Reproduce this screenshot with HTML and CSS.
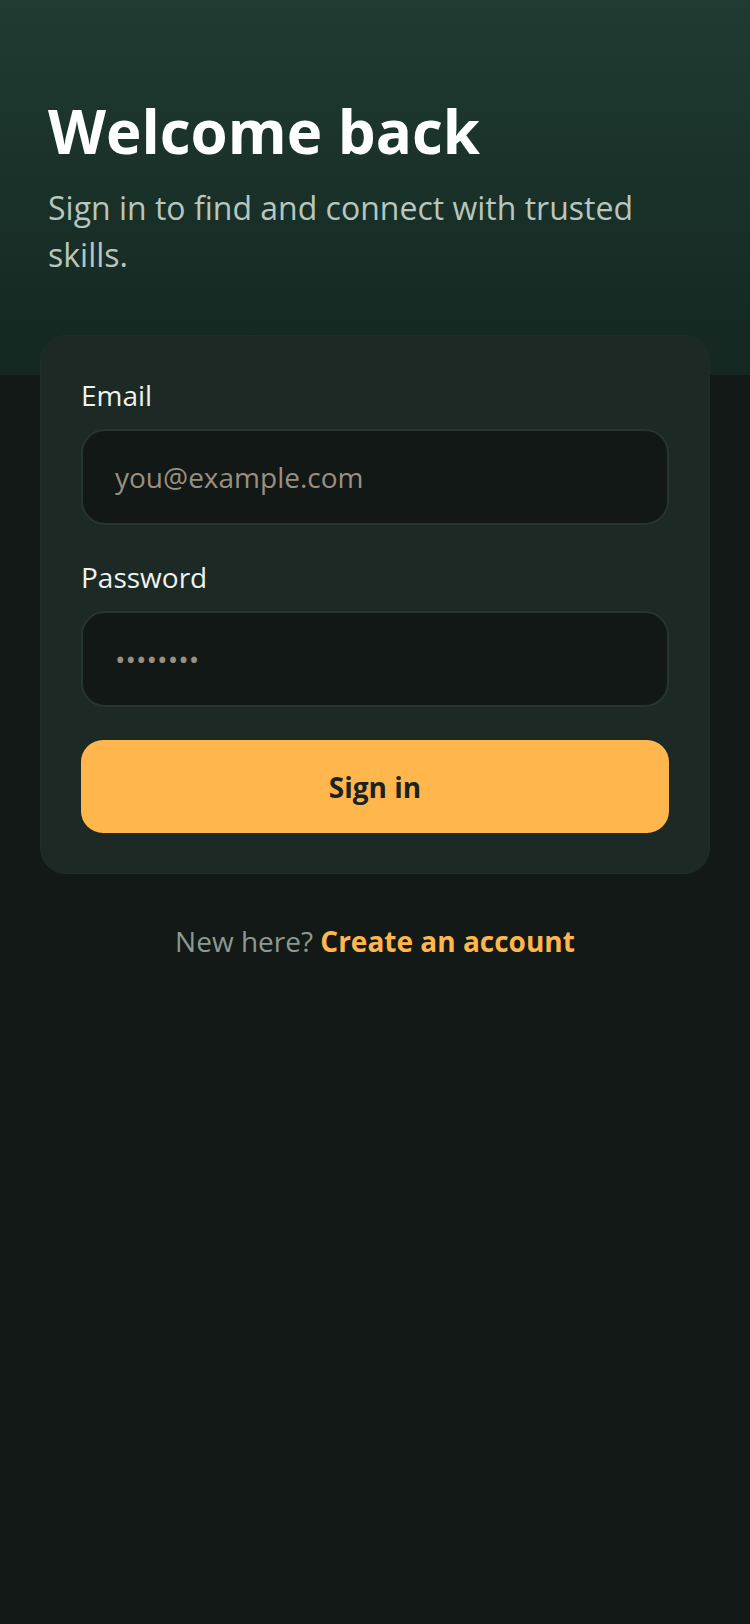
FILE: index.html
```html
<!DOCTYPE html>
<html lang="en">
<head>
<meta charset="utf-8">
<title>Sign in</title>
<link rel="stylesheet" href="styles.css">
</head>
<body>
<main class="page">
  <header class="hero">
    <h1 class="hero-title">Welcome back</h1>
    <p class="hero-sub">Sign in to find and connect with trusted skills.</p>
  </header>
  <form class="card">
    <div class="field">
      <label class="field-label" for="email">Email</label>
      <input class="field-input" id="email" type="email" placeholder="you@example.com">
    </div>
    <div class="field">
      <label class="field-label" for="password">Password</label>
      <input class="field-input field-password" id="password" type="password" placeholder="••••••••">
    </div>
    <button class="btn-primary" type="button">Sign in</button>
  </form>
  <p class="footer-note">New here? <a class="footer-link" href="#">Create an account</a></p>
</main>
</body>
</html>
```

FILE: styles.css
```css
* { box-sizing: border-box; }
html, body {
  margin: 0;
  padding: 0;
}
body {
  min-height: 1624px;
  font-family: "Open Sans", "Noto Sans", sans-serif;
  background: linear-gradient(180deg, #1f3b32 0px, #142720 375px, #121917 375px, #121917 100%);
  color: #eef3ef;
}
.page {
  display: flex;
  flex-direction: column;
}
.hero {
  padding: 95px 48px 0 48px;
  height: 335px;
}
.hero-title {
  margin: 0;
  font-size: 60px;
  line-height: 72px;
  font-weight: 700;
  color: #ffffff;
  letter-spacing: 0;
}
.hero-sub {
  margin: 17px 0 0 0;
  font-size: 32px;
  line-height: 47px;
  font-weight: 400;
  color: #b7c6be;
}
.card {
  margin: 0 40px;
  padding: 40px 40px;
  background: #1c2925;
  border: 1px solid #202e29;
  border-radius: 26px;
  display: flex;
  flex-direction: column;
  gap: 33px;
}
.field {
  display: flex;
  flex-direction: column;
  gap: 14px;
}
.field-label {
  font-size: 28px;
  line-height: 39px;
  color: #eef3ef;
}
.field-input {
  height: 96px;
  width: 100%;
  padding: 0 32px;
  background: #111815;
  border: 2px solid #27342f;
  border-radius: 24px;
  font-family: "Open Sans", "Noto Sans", sans-serif;
  font-size: 28px;
  color: #eef3ef;
  outline: none;
}
.field-input::placeholder {
  color: #9b8f80;
  opacity: 1;
}
.btn-primary {
  height: 93px;
  border: none;
  border-radius: 22px;
  background: #ffb74d;
  color: #1a231f;
  font-family: "Open Sans", "Noto Sans", sans-serif;
  font-size: 28px;
  font-weight: 700;
  cursor: pointer;
}
.footer-note {
  margin: 48px 0 0 0;
  text-align: center;
  font-size: 28px;
  line-height: 39px;
  color: #8b9993;
}
.footer-link {
  color: #ffb74d;
  font-weight: 700;
  text-decoration: none;
}
```
